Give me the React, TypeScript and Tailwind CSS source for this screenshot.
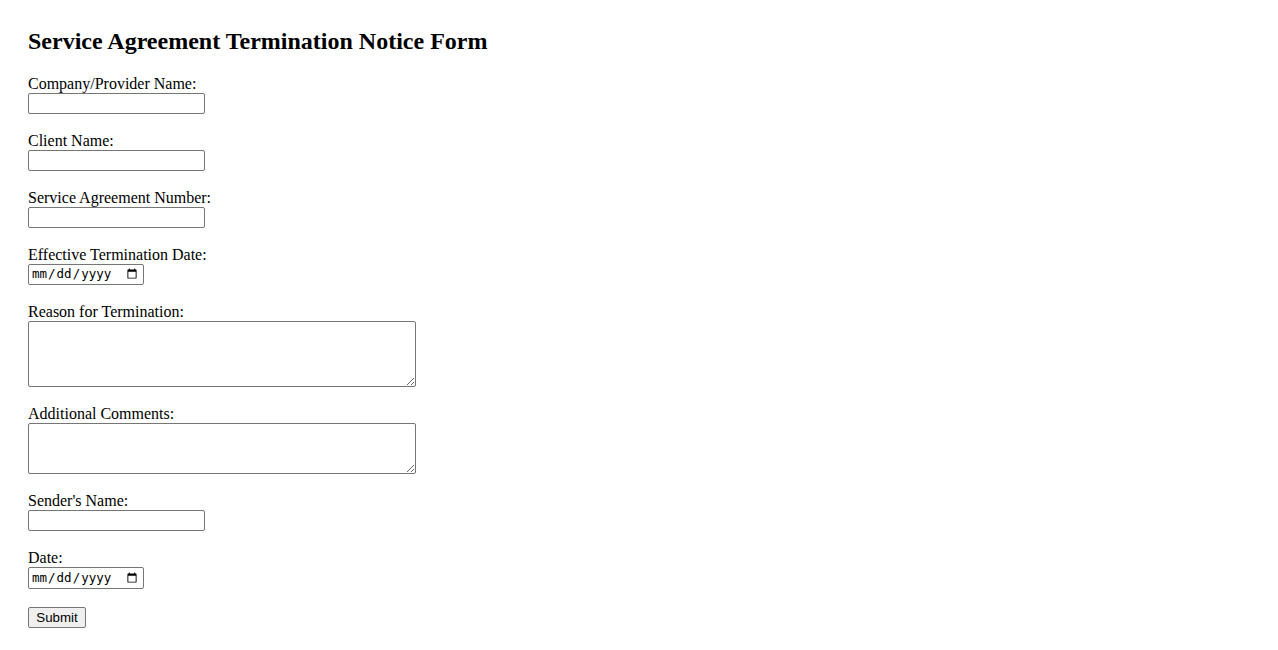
import React from "react";

const serif = { fontFamily: '"Liberation Serif", "Times New Roman", serif' };

const inputCls =
  "block w-[177px] h-[21px] border border-[#767676] rounded-[2px] bg-white px-[2px] py-[1px] text-[13.33px] text-black [font-family:'Liberation_Sans',Arial,sans-serif] outline-none";
const dateCls =
  "block w-[116px] border border-[#767676] rounded-[2px] bg-white pl-[2px] pr-[3px] py-0 text-[12.5px] text-black [font-family:'DejaVu_Sans_Mono',monospace] outline-none";
const areaCls =
  "block w-[388px] border border-[#767676] rounded-[2px] bg-white px-[2px] py-[2px] text-[13.33px] text-black [font-family:'Liberation_Mono',monospace] outline-none resize";

function Field({
  label,
  children,
  mb = "mb-[18px]",
}: {
  label: string;
  children: React.ReactNode;
  mb?: string;
}) {
  return (
    <div className={mb}>
      <label className="block text-[16px] leading-[18px] text-black">{label}</label>
      {children}
    </div>
  );
}

export default function App() {
  return (
    <div className="min-h-[650px] bg-white px-[28px] pt-[28px]" style={serif}>
      <h2 className="text-[24px] font-bold leading-[27px] mb-[20px] text-black">
        Service Agreement Termination Notice Form
      </h2>
      <form onSubmit={(e) => e.preventDefault()}>
        <Field label="Company/Provider Name:">
          <input type="text" className={inputCls} />
        </Field>
        <Field label="Client Name:">
          <input type="text" className={inputCls} />
        </Field>
        <Field label="Service Agreement Number:">
          <input type="text" className={inputCls} />
        </Field>
        <Field label="Effective Termination Date:">
          <input type="date" className={`${dateCls} h-[21px]`} />
        </Field>
        <Field label="Reason for Termination:">
          <textarea className={`${areaCls} h-[66px]`} />
        </Field>
        <Field label="Additional Comments:">
          <textarea className={`${areaCls} h-[51px]`} />
        </Field>
        <Field label="Sender's Name:">
          <input type="text" className={inputCls} />
        </Field>
        <Field label="Date:">
          <input type="date" className={`${dateCls} h-[22px]`} />
        </Field>
        <button
          type="submit"
          className="block w-[58px] h-[21px] border border-[#767676] rounded-[2px] bg-[#efefef] text-[13.33px] leading-[19px] text-black [font-family:'Liberation_Sans',Arial,sans-serif]"
        >
          Submit
        </button>
      </form>
    </div>
  );
}
